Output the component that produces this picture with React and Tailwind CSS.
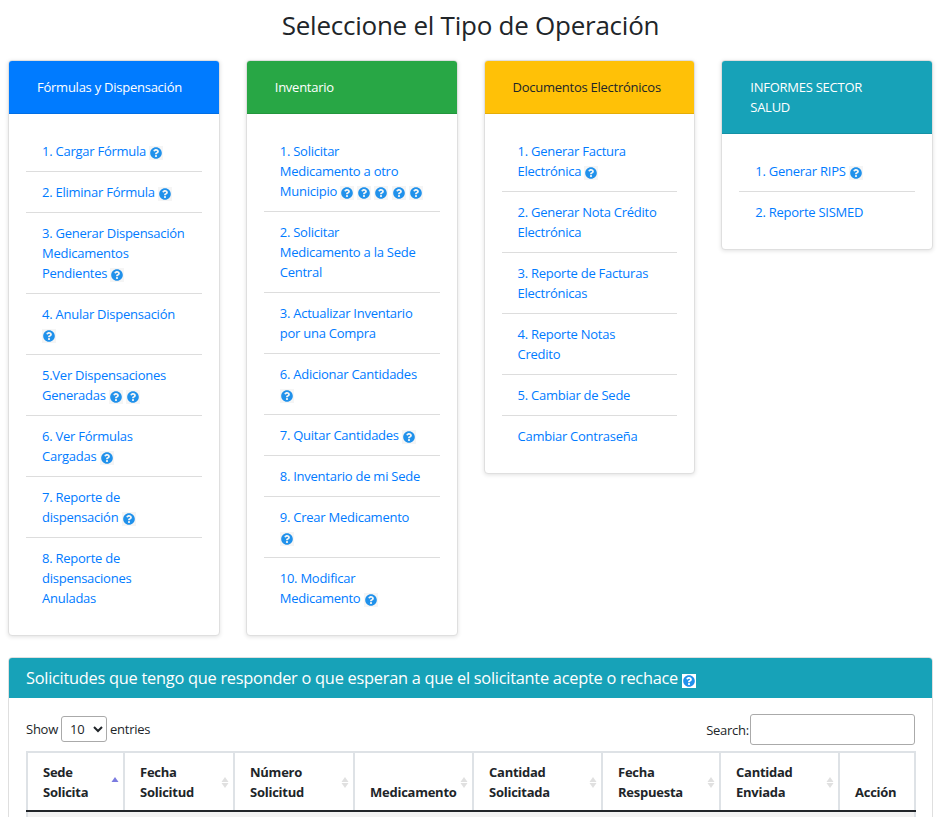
import React from 'react';
import { FaQuestionCircle } from 'react-icons/fa';

const Help = ({ white }) => (
  <span className={`inline-flex h-[14px] w-[14px] items-center justify-center align-[-3px] ${white ? 'bg-white' : 'bg-[#f5f5f5]'}`}>
    <FaQuestionCircle className="h-3 w-3 text-[#2091eb]" />
  </span>
);

const Helps = ({ count }) => (
  <>
    {Array.from({ length: count }).map((_, i) => (
      <React.Fragment key={i}>
        {' '}
        <Help />
      </React.Fragment>
    ))}
  </>
);

const cards = [
  {
    title: 'Fórmulas y Dispensación',
    header: 'bg-[#007bff] text-white',
    items: [
      ['1. Cargar Fórmula', 1],
      ['2. Eliminar Fórmula', 1],
      ['3. Generar Dispensación Medicamentos Pendientes', 1],
      ['4. Anular Dispensación', 1],
      ['5.Ver Dispensaciones Generadas', 2],
      ['6. Ver Fórmulas Cargadas', 1],
      ['7. Reporte de dispensación', 1],
      ['8. Reporte de dispensaciones Anuladas', 0],
    ],
  },
  {
    title: 'Inventario',
    header: 'bg-[#28a745] text-white',
    items: [
      ['1. Solicitar\nMedicamento a otro Municipio', 5],
      ['2. Solicitar\nMedicamento a la Sede Central', 0],
      ['3. Actualizar Inventario por una Compra', 0],
      ['6. Adicionar Cantidades', 1],
      ['7. Quitar Cantidades', 1],
      ['8. Inventario de mi Sede', 0],
      ['9. Crear Medicamento', 1],
      ['10. Modificar Medicamento', 1],
    ],
  },
  {
    title: 'Documentos Electrónicos',
    header: 'bg-[#ffc107] text-[#212529]',
    items: [
      ['1. Generar Factura Electrónica', 1],
      ['2. Generar Nota Crédito Electrónica', 0],
      ['3. Reporte de Facturas Electrónicas', 0],
      ['4. Reporte Notas\nCredito', 0],
      ['5. Cambiar de Sede', 0],
      ['Cambiar Contraseña', 0],
    ],
  },
  {
    title: 'INFORMES SECTOR SALUD',
    header: 'bg-[#17a2b8] text-white',
    items: [
      ['1. Generar RIPS', 1],
      ['2. Reporte SISMED', 0],
    ],
  },
];

const columns = [
  { label: ['Sede', 'Solicita'], width: 'w-[97px]', active: true },
  { label: ['Fecha', 'Solicitud'], width: 'w-[110px]' },
  { label: ['Número', 'Solicitud'], width: 'w-[120px]' },
  { label: ['Medicamento'], width: 'w-[119px]' },
  { label: ['Cantidad', 'Solicitada'], width: 'w-[129px]' },
  { label: ['Fecha', 'Respuesta'], width: 'w-[118px]' },
  { label: ['Cantidad', 'Enviada'], width: 'w-[119px]' },
  { label: ['Acción'], width: 'w-[76px]', noSort: true },
];

const SortIcon = ({ active }) => (
  <svg className="absolute right-[4px] top-[23px] h-[14px] w-[8px]" viewBox="0 0 8 14">
    <path d="M4 1 L7.5 6 H0.5 Z" fill={active ? '#7b7be0' : '#e0e0e0'} />
    {!active && <path d="M4 12 L7.5 7 H0.5 Z" fill="#e0e0e0" />}
  </svg>
);

const MenuCard = ({ card }) => (
  <div className="rounded border border-[#dfdfdf] bg-white shadow-[0_1px_4px_rgba(0,0,0,0.12)]">
    <div className={`rounded-t-[3px] border-b border-black/10 py-[16px] pl-[28px] pr-[28px] text-[13px] leading-[20px] ${card.header}`}>
      {card.title}
    </div>
    <ul className="px-[17px] py-[17px]">
      {card.items.map(([text, helps], i) => (
        <li
          key={text}
          className={`whitespace-pre-line px-[16px] py-[10px] ${i < card.items.length - 1 ? 'border-b border-[#dddddd]' : ''}`}
        >
          <a className="text-[#007bff]">{text}</a>
          <Helps count={helps} />
        </li>
      ))}
    </ul>
  </div>
);

export default function App() {
  return (
    <div className="h-screen overflow-hidden bg-white text-[13px] leading-[20px] tracking-[-0.25px] text-[#212529] font-['Open_Sans',sans-serif]">
      <h1 className="h-[60px] pt-[7px] text-center text-[26px] leading-[36px]">Seleccione el Tipo de Operación</h1>
      <div className="grid grid-cols-4 items-start gap-x-[26px] px-[8px]">
        {cards.map((card) => (
          <MenuCard key={card.title} card={card} />
        ))}
      </div>
      <div className="mx-[8px] mt-[21px] rounded border border-[#dfdfdf] bg-white">
        <div className="rounded-t-[3px] bg-[#17a2b8] px-[17px] py-[9px] text-[16.35px] leading-[22px] text-white">
          Solicitudes que tengo que responder o que esperan a que el solicitante acepte o rechace <Help white />
        </div>
        <div className="px-[17px] pt-[16px]">
          <div className="flex items-start justify-between">
            <div className="flex items-center gap-[3px] pt-[2px]">
              Show
              <select className="h-[26px] w-[46px] rounded-[3px] border border-[#aaaaaa] bg-white pl-[4px]">
                <option>10</option>
              </select>
              entries
            </div>
            <label className="flex items-center">
              Search:
              <input className="ml-[1px] h-[31px] w-[165px] rounded-[3px] border border-[#aaaaaa]" />
            </label>
          </div>
          <table className="mt-[6px] w-[889px] table-fixed border-collapse border-2 border-[#dee2e6]">
            <thead>
              <tr>
                {columns.map((col) => (
                  <th
                    key={col.width + col.label[0]}
                    className={`relative h-[59px] border-x-2 border-b-2 border-x-[#dee2e6] border-b-[#212529] pl-[15px] pb-[8px] text-left align-bottom text-[13px] font-bold leading-[20px] ${col.width}`}
                  >
                    {col.label.map((line) => (
                      <div key={line}>{line}</div>
                    ))}
                    {!col.noSort && <SortIcon active={col.active} />}
                  </th>
                ))}
              </tr>
            </thead>
            <tbody>
              <tr className="bg-[#f2f2f2]">
                <td colSpan={8} className="h-[40px]"></td>
              </tr>
            </tbody>
          </table>
        </div>
      </div>
    </div>
  );
}
